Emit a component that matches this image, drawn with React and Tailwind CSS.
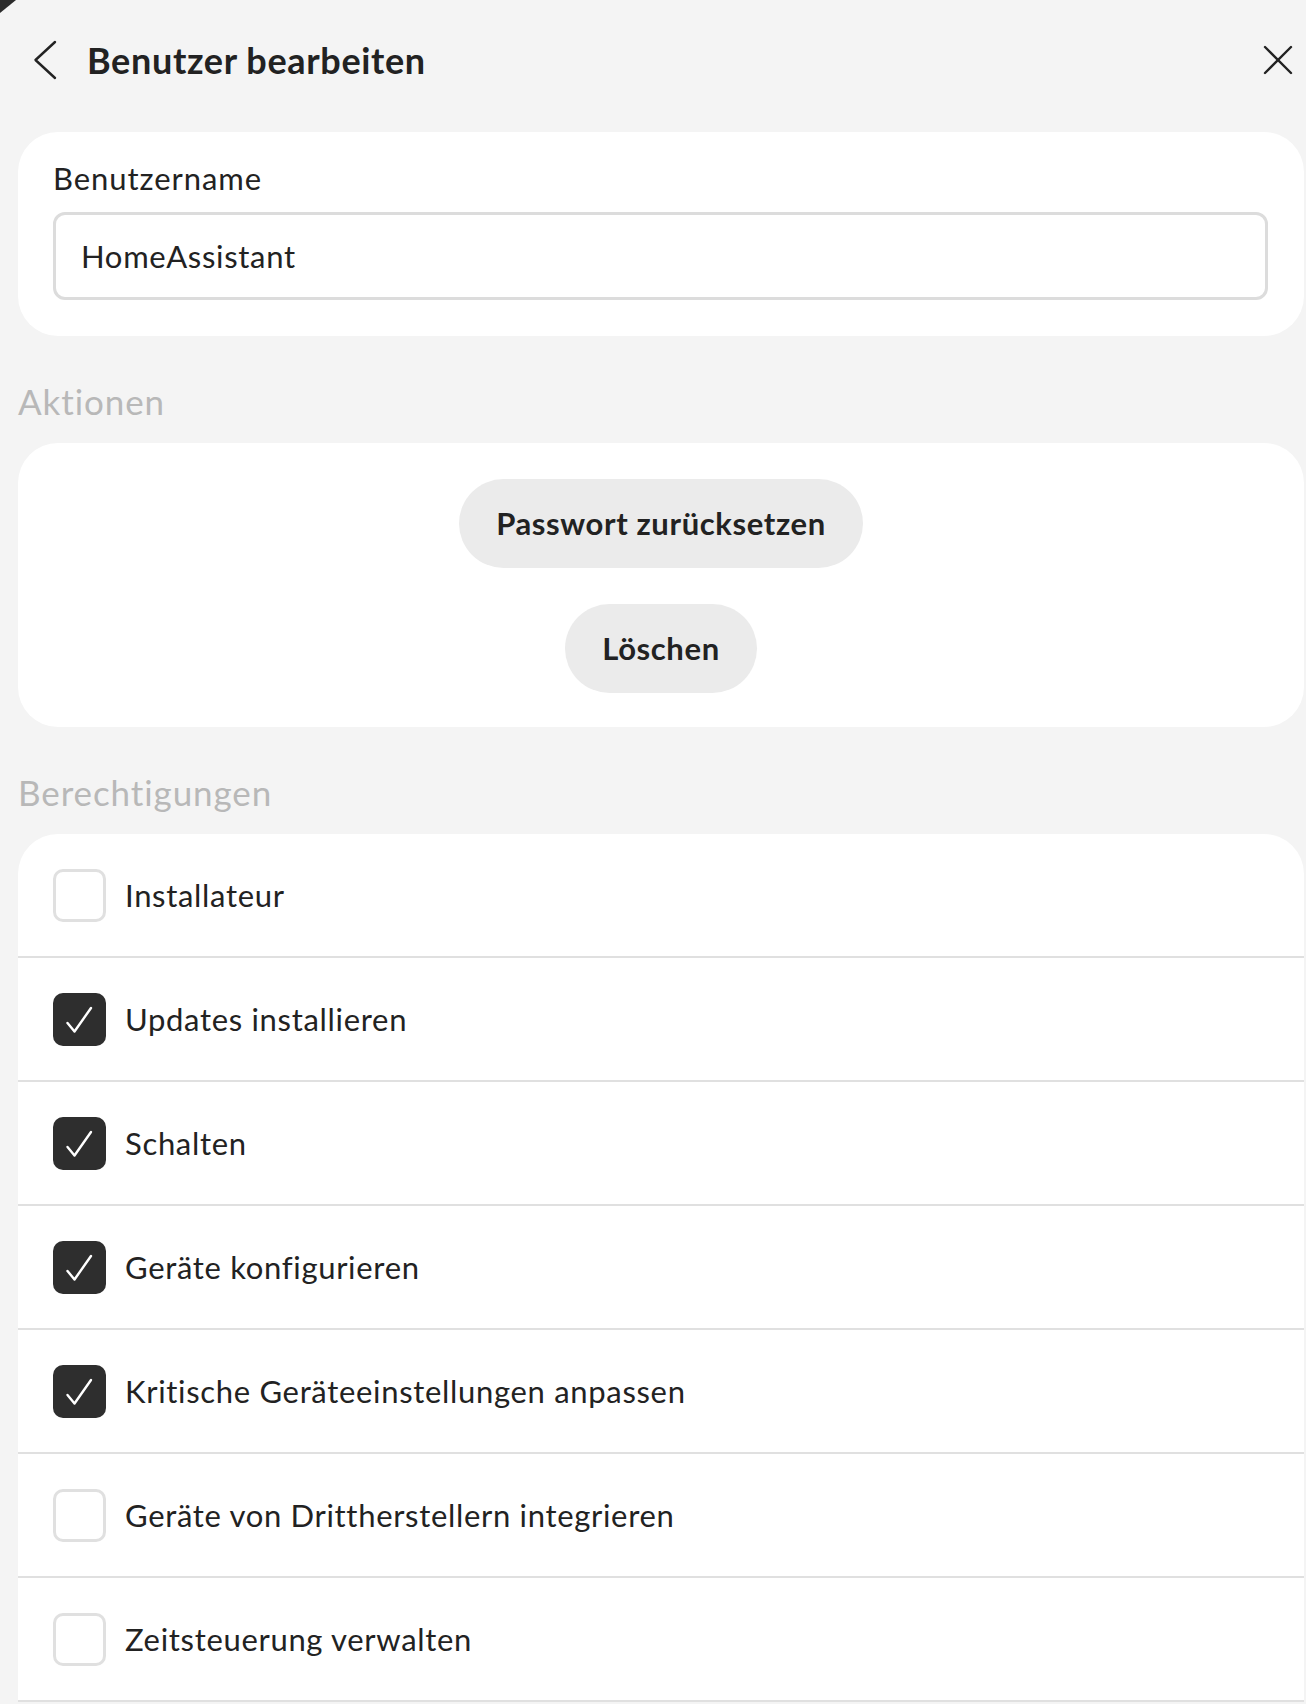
import React from 'react';

const permissions = [
  { label: 'Installateur', checked: false },
  { label: 'Updates installieren', checked: true },
  { label: 'Schalten', checked: true },
  { label: 'Geräte konfigurieren', checked: true },
  { label: 'Kritische Geräteeinstellungen anpassen', checked: true },
  { label: 'Geräte von Drittherstellern integrieren', checked: false },
  { label: 'Zeitsteuerung verwalten', checked: false },
];

const Checkbox = ({ checked }) =>
  checked ? (
    <div className="w-[53px] h-[53px] rounded-[10px] bg-[#2e2e2e] flex items-center justify-center shrink-0">
      <svg width="53" height="53" viewBox="0 0 53 53" fill="none">
        <path d="M14.5 30 L21.5 38.5 L38 15" stroke="#fff" strokeWidth="2.4" strokeLinecap="round" strokeLinejoin="round" />
      </svg>
    </div>
  ) : (
    <div className="w-[53px] h-[53px] rounded-[10px] border-[3px] border-[#e0e0e0] bg-white shrink-0"></div>
  );

const SectionTitle = ({ children }) => (
  <div className="pl-[18px] pt-[45px] pb-[22px] text-[35px] leading-[40px] tracking-[0.026em] text-[#b8b8b8]">
    {children}
  </div>
);

const App = () => {
  return (
    <div
      className="relative bg-[#f4f4f4] min-h-[1704px] overflow-hidden text-[#222]"
      style={{ fontFamily: 'Lato, "Noto Sans", sans-serif' }}
    >
      {/* device corner */}
      <svg className="absolute top-0 left-0" width="18" height="15" viewBox="0 0 18 15">
        <polygon points="0,0 16,0 0,13" fill="#2b2b2b" />
      </svg>

      {/* Header */}
      <div className="h-[120px] flex items-center justify-between pl-[33px] pr-[13px]">
        <div className="flex items-center gap-[30px]">
          <svg width="24" height="40" viewBox="0 0 24 40" fill="none">
            <path d="M22 2 L2.5 20 L22 38" stroke="#222" strokeWidth="2.4" strokeLinecap="round" strokeLinejoin="round" />
          </svg>
          <h1 className="text-[36px] font-bold leading-[40px] tracking-[0.018em]">Benutzer bearbeiten</h1>
        </div>
        <svg width="30" height="30" viewBox="0 0 30 30" fill="none">
          <path d="M2 2 L28 28 M28 2 L2 28" stroke="#222" strokeWidth="2.4" strokeLinecap="round" />
        </svg>
      </div>

      {/* Benutzername */}
      <div className="mt-[12px] ml-[18px] mr-[2px] bg-white rounded-[40px] pl-[35px] pr-[36px] pt-[29px] pb-[36px]">
        <label className="block text-[31px] leading-[35px] tracking-[0.03em]">Benutzername</label>
        <div className="mt-[16px] h-[88px] border-[3px] border-[#dcdcdc] rounded-[12px] flex items-center pl-[25px] text-[31px] tracking-[0.022em]">
          HomeAssistant
        </div>
      </div>

      <SectionTitle>Aktionen</SectionTitle>
      <div className="ml-[18px] mr-[2px] bg-white rounded-[40px] pt-[36px] pb-[34px] flex flex-col items-center gap-[36px]">
        <button className="h-[89px] px-[37px] rounded-full bg-[#ebebeb] text-[31px] font-bold tracking-[0.02em] text-[#222]">
          Passwort zurücksetzen
        </button>
        <button className="h-[89px] px-[37px] rounded-full bg-[#ebebeb] text-[31px] font-bold tracking-[0.02em] text-[#222]">
          Löschen
        </button>
      </div>

      <SectionTitle>Berechtigungen</SectionTitle>
      <div className="ml-[18px] mr-[2px] bg-white rounded-t-[40px]">
        {permissions.map((p) => (
          <div
            key={p.label}
            className="h-[124px] border-b-2 border-[#e0e0e0] flex items-center pl-[35px] gap-[19px]"
          >
            <Checkbox checked={p.checked} />
            <span className="text-[31px] leading-[36px] tracking-[0.022em]">{p.label}</span>
          </div>
        ))}
      </div>
    </div>
  );
};

export default App;
